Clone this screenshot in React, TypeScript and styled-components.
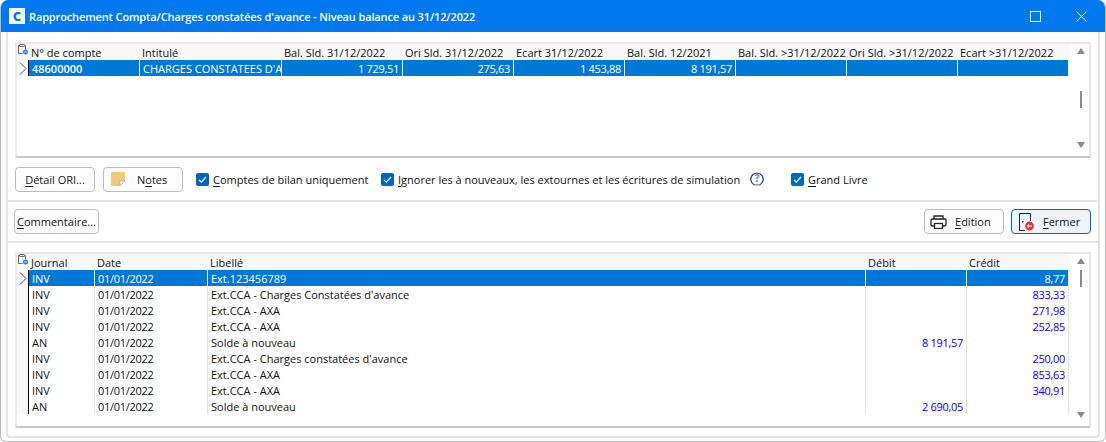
import styled, { createGlobalStyle } from 'styled-components';

const GlobalStyle = createGlobalStyle`
  html, body {
    margin: 0;
    padding: 0;
    background: #fff;
  }
  body {
    font-family: 'Open Sans', 'Noto Sans', 'Liberation Sans', sans-serif;
    font-size: 11px;
    color: #111;
  }
`;

const TOP_COLS = '112px 142px 121px 111px 111px 111px 111px 111px 111px';
const BOTTOM_COLS = '67px 113px 658px 101px 102px';

const topHeader = [
  'N° de compte',
  'Intitulé',
  'Bal. Sld. 31/12/2022',
  'Ori Sld. 31/12/2022',
  'Ecart 31/12/2022',
  'Bal. Sld. 12/2021',
  'Bal. Sld. >31/12/2022',
  'Ori Sld. >31/12/2022',
  'Ecart >31/12/2022',
];

const bottomHeader = ['Journal', 'Date', 'Libellé', 'Débit', 'Crédit'];

const bottomRows = [
  ['INV', 'Ext.123456789', '', '8,77'],
  ['INV', 'Ext.CCA - Charges Constatées d\'avance', '', '833,33'],
  ['INV', 'Ext.CCA - AXA', '', '271,98'],
  ['INV', 'Ext.CCA - AXA', '', '252,85'],
  ['AN', 'Solde à nouveau', '8 191,57', ''],
  ['INV', 'Ext.CCA - Charges constatées d\'avance', '', '250,00'],
  ['INV', 'Ext.CCA - AXA', '', '853,63'],
  ['INV', 'Ext.CCA - AXA', '', '340,91'],
  ['AN', 'Solde à nouveau', '2 690,05', ''],
];

const GridIcon = () => (
  <svg width="10" height="11" viewBox="0 0 10 11" fill="none">
    <path d="M6.5 1.5H7.5V5.5M4.5 9.5H.5V1.5H2" stroke="#666" />
    <rect x="2" y=".5" width="4" height="2" fill="#fff" stroke="#666" />
    <circle cx="7.5" cy="8" r="2.5" fill="#1c86d6" />
    <path d="M6.2 8h2.6" stroke="#fff" strokeWidth=".8" />
  </svg>
);

const Chevron = () => (
  <svg width="8" height="13" viewBox="0 0 8 13" fill="none">
    <path d="M1 .5l6 6-6 6" stroke="#555" />
  </svg>
);

const Check = () => (
  <svg width="13" height="13" viewBox="0 0 13 13" fill="none">
    <path d="M3 6.8l2.3 2.3L10 4" stroke="#fff" strokeWidth="1.2" />
  </svg>
);

const App = () => (
  <>
    <GlobalStyle />
    <Window>
      <TitleBar>
        <Logo>C</Logo>
        <Title>Rapprochement Compta/Charges constatées d'avance - Niveau balance au 31/12/2022</Title>
        <WindowControls>
          <svg width="11" height="11" viewBox="0 0 11 11" fill="none">
            <rect x=".5" y=".5" width="10" height="10" stroke="#fff" />
          </svg>
          <svg width="11" height="11" viewBox="0 0 11 11" fill="none">
            <path d="M.5.5l10 10M10.5.5l-10 10" stroke="#fff" />
          </svg>
        </WindowControls>
      </TitleBar>

      <Frame>
        <TopSection>
          <Panel $height={116}>
            <Table>
              <HeaderLine>
                <HeaderGutter><GridIcon /></HeaderGutter>
                <Cells $cols={TOP_COLS}>
                  {topHeader.map((label) => <HeaderCell key={label}>{label}</HeaderCell>)}
                </Cells>
              </HeaderLine>
              <Line>
                <Gutter><Chevron /></Gutter>
                <Cells $cols={TOP_COLS} $selected $marked>
                  <Cell $bold>48600000</Cell>
                  <Cell>CHARGES CONSTATEES D'AVANCE</Cell>
                  <Cell $right>1 729,51</Cell>
                  <Cell $right>275,63</Cell>
                  <Cell $right>1 453,88</Cell>
                  <Cell $right>8 191,57</Cell>
                  <Cell />
                  <Cell />
                  <Cell />
                </Cells>
              </Line>
            </Table>
            <Scrollbar>
              <ArrowUp />
              <Thumb $offset={37} $height={17} />
              <ArrowDown />
            </Scrollbar>
          </Panel>

          <Toolbar>
            <Button $width={80}><Accel>D</Accel>étail ORI...</Button>
            <Button $width={80} $inset={7}>
              <NoteIcon viewBox="0 0 14 14" width="14" height="14">
                <path d="M1 0h12a1 1 0 0 1 1 1v8l-5 5H1a1 1 0 0 1-1-1V1a1 1 0 0 1 1-1z" fill="#eecb7c" />
                <path d="M14 9H9v5z" fill="#f4f4f4" stroke="#aaa" strokeWidth=".6" />
              </NoteIcon>
              <span>N<Accel>o</Accel>tes</span>
            </Button>
            <CheckGroup>
              <CheckItem $width={173}>
                <CheckBox><Check /></CheckBox>
                <span><Accel>C</Accel>omptes de bilan uniquement</span>
              </CheckItem>
              <CheckItem $width={398}>
                <CheckBox><Check /></CheckBox>
                <span><Accel>I</Accel>gnorer les à nouveaux, les extournes et les écritures de simulation</span>
                <HelpIcon viewBox="0 0 14 14" width="14" height="14">
                  <path d="M4.4 12.9A6.2 6.2 0 1 1 9.6 12.9" fill="none" stroke="#222" strokeWidth="1.1" />
                  <path d="M4.4 12.9h5.2" stroke="#222" strokeWidth=".7" />
                  <text x="7" y="10.4" textAnchor="middle" fontSize="10" fontWeight="800" fill="#5fa2dc" fontFamily="Open Sans">?</text>
                </HelpIcon>
              </CheckItem>
              <CheckItem $width={80}>
                <CheckBox><Check /></CheckBox>
                <span><Accel>G</Accel>rand Livre</span>
              </CheckItem>
            </CheckGroup>
          </Toolbar>
        </TopSection>

        <Actions>
          <Button $width={85}><Accel>C</Accel>ommentaire...</Button>
          <ActionsRight>
            <Button $width={80} $inset={5}>
              <svg width="17" height="14" viewBox="0 0 17 14" fill="none">
                <path d="M4 4V1h9v3" stroke="#222" strokeWidth="1.3" />
                <rect x="1" y="4" width="15" height="7" rx="1.5" stroke="#222" strokeWidth="1.3" />
                <rect x="4.5" y="8.5" width="8" height="5" fill="#fff" stroke="#222" strokeWidth="1.3" />
              </svg>
              <ButtonLabel $gap={8}><Accel>E</Accel>dition</ButtonLabel>
            </Button>
            <Button $width={80} $inset={7} $primary>
              <svg width="15" height="18" viewBox="0 0 15 18" fill="none">
                <path d="M6 17.5H.5V.5h11V8" stroke="#222" />
                <rect x="3" y="8" width="1.5" height="1.5" fill="#222" />
                <circle cx="10.5" cy="13" r="4.4" fill="#e5333c" />
                <path d="M8 13h5M10 11l-2 2 2 2" stroke="#fff" />
              </svg>
              <ButtonLabel $gap={9}><Accel>F</Accel>ermer</ButtonLabel>
            </Button>
          </ActionsRight>
        </Actions>

        <BottomSection>
          <Panel $height={176}>
            <Table>
              <HeaderLine>
                <HeaderGutter><GridIcon /></HeaderGutter>
                <Cells $cols={BOTTOM_COLS}>
                  {bottomHeader.map((label) => <HeaderCell key={label}>{label}</HeaderCell>)}
                </Cells>
              </HeaderLine>
              {bottomRows.map((row, index) => (
                <Line key={index}>
                  <Gutter>{index === 0 && <Chevron />}</Gutter>
                  <Cells $cols={BOTTOM_COLS} $selected={index === 0} $marked>
                    <Cell>{row[0]}</Cell>
                    <Cell $tight>01/01/2022</Cell>
                    <Cell>{row[1]}</Cell>
                    <Cell $right $blue={index !== 0}>{row[2]}</Cell>
                    <Cell $right $blue={index !== 0}>{row[3]}</Cell>
                  </Cells>
                </Line>
              ))}
            </Table>
            <Scrollbar>
              <ArrowUp />
              <Thumb $offset={6} $height={17} />
              <ArrowDown />
            </Scrollbar>
          </Panel>
        </BottomSection>
      </Frame>
    </Window>
  </>
);

const Window = styled.div`
  box-sizing: border-box;
  width: 1106px;
  height: 442px;
  display: flex;
  flex-direction: column;
  background: #fff;
  border: 1px solid #bdbdbd;
  border-top: none;
  border-radius: 8px 8px 6px 6px;
  overflow: hidden;
`;

const TitleBar = styled.div`
  height: 32px;
  margin: 0 -1px;
  flex: none;
  display: flex;
  align-items: center;
  padding-left: 9px;
  background: #0078f0;
  color: #fff;
`;

const Logo = styled.div`
  width: 16px;
  height: 16px;
  display: flex;
  align-items: center;
  justify-content: center;
  background: #fff;
  color: #0078f0;
  font-size: 13px;
  font-weight: 800;
  line-height: 1;
`;

const Title = styled.div`
  margin-left: 4px;
  font-size: 11px;
  font-weight: 600;
  letter-spacing: -0.13px;
`;

const WindowControls = styled.div`
  margin-left: auto;
  margin-right: 19px;
  display: flex;
  gap: 35px;
  align-items: center;
`;

const Frame = styled.div`
  box-sizing: border-box;
  flex: 1;
  margin: 0 5px 3px;
  border: 2px solid #e4e4e4;
  border-top: none;
  border-radius: 0 0 4px 4px;
  display: flex;
  flex-direction: column;
`;

const TopSection = styled.div`
  padding: 10px 7px 0;
  border-bottom: 2px solid #e4e4e4;
`;

const Panel = styled.div<{ $height: number }>`
  box-sizing: border-box;
  height: ${({ $height }) => $height}px;
  display: flex;
  border: 2px solid #e8e8e8;
  border-bottom-color: #c8c8c8;
`;

const Table = styled.div`
  width: 1052px;
  flex: none;
`;

const Line = styled.div`
  display: flex;
`;

const HeaderLine = styled(Line)`
  background: #f8f8f8;
`;

const Gutter = styled.div`
  width: 11px;
  height: 16px;
  flex: none;
  display: flex;
  align-items: center;
  justify-content: center;
  background: #f8f8f8;
`;

const HeaderGutter = styled(Gutter)`
  align-items: flex-start;
`;

const Cells = styled.div<{ $cols: string; $selected?: boolean; $marked?: boolean }>`
  display: grid;
  grid-template-columns: ${({ $cols }) => $cols};
  height: 16px;
  line-height: 18px;
  flex: 1;
  box-shadow: ${({ $marked }) => ($marked ? 'inset 1px 0 0 #000' : 'none')};
  background: ${({ $selected }) => ($selected ? '#0078d7' : 'transparent')};
  color: ${({ $selected }) => ($selected ? '#fff' : 'inherit')};
  --sep: ${({ $selected }) => ($selected ? '#fff' : '#e2e2e2')};
`;

const HeaderCell = styled.div`
  padding-left: 2px;
  white-space: nowrap;
  &:first-child {
    padding-left: 3px;
  }
`;

const Cell = styled.div<{ $right?: boolean; $bold?: boolean; $blue?: boolean; $tight?: boolean }>`
  padding: 0 3px;
  overflow: hidden;
  white-space: nowrap;
  text-align: ${({ $right }) => ($right ? 'right' : 'left')};
  letter-spacing: ${({ $right, $tight }) => ($right || $tight ? '-0.3px' : '0')};
  font-weight: ${({ $bold }) => ($bold ? 600 : 400)};
  color: ${({ $blue }) => ($blue ? '#0000ff' : 'inherit')};
  border-right: 1px solid var(--sep);
  &:first-child {
    padding-left: 4px;
  }
`;

const Scrollbar = styled.div`
  flex: 1;
  display: flex;
  flex-direction: column;
  align-items: center;
  padding: 4px 0 8px 3px;
`;

const ArrowUp = styled.div`
  width: 0;
  height: 0;
  border-left: 4.5px solid transparent;
  border-right: 4.5px solid transparent;
  border-bottom: 6px solid #8a8a8a;
`;

const ArrowDown = styled.div`
  width: 0;
  height: 0;
  margin-top: auto;
  border-left: 4.5px solid transparent;
  border-right: 4.5px solid transparent;
  border-top: 6px solid #8a8a8a;
`;

const Thumb = styled.div<{ $offset: number; $height: number }>`
  width: 2px;
  margin-top: ${({ $offset }) => $offset}px;
  height: ${({ $height }) => $height}px;
  background: #8a8a8a;
`;

const Toolbar = styled.div`
  height: 42px;
  display: flex;
  align-items: center;
  gap: 8px;
`;

const Button = styled.div<{ $width: number; $primary?: boolean; $inset?: number }>`
  box-sizing: border-box;
  width: ${({ $width }) => $width}px;
  height: 25px;
  display: flex;
  align-items: center;
  justify-content: ${({ $inset }) => ($inset ? 'flex-start' : 'center')};
  padding-left: ${({ $inset }) => $inset ?? 0}px;
  flex: none;
  border: 1px solid ${({ $primary }) => ($primary ? '#0067c0' : '#bcbcbc')};
  border-radius: 4px;
  background: ${({ $primary }) => ($primary ? '#eef4fb' : '#fdfdfd')};
`;

const ButtonLabel = styled.span<{ $gap: number }>`
  margin-left: ${({ $gap }) => $gap}px;
`;

const NoteIcon = styled.svg`
  margin-right: 12px;
`;

const Accel = styled.u`
  text-underline-offset: 2px;
  text-decoration-thickness: 1px;
`;

const CheckGroup = styled.div`
  display: flex;
  align-items: center;
  margin-left: 5px;
  gap: 12px;
`;

const CheckItem = styled.div<{ $width: number }>`
  width: ${({ $width }) => $width}px;
  display: flex;
  align-items: center;
  gap: 4px;
  white-space: nowrap;
`;

const CheckBox = styled.div`
  width: 13px;
  height: 13px;
  flex: none;
  background: #0067c0;
  border-radius: 2px;
`;

const HelpIcon = styled.svg`
  margin-left: 6px;
`;

const Actions = styled.div`
  height: 39px;
  padding: 0 7px 0 6px;
  display: flex;
  align-items: center;
  justify-content: space-between;
  border-bottom: 2px solid #e4e4e4;
`;

const ActionsRight = styled.div`
  display: flex;
  gap: 7px;
`;

const BottomSection = styled.div`
  padding: 9px 7px 0;
`;

export default App;
